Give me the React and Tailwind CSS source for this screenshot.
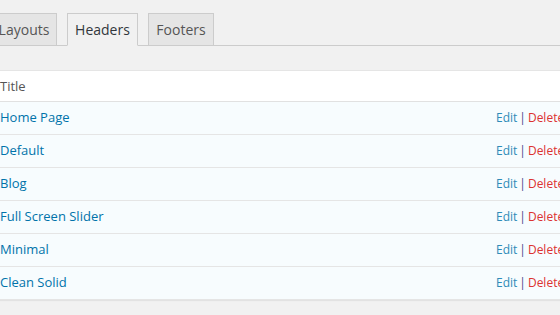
const rows = ['Home Page', 'Default', 'Blog', 'Full Screen Slider', 'Minimal', 'Clean Solid']

export default function App() {
  return (
    <div className="w-[560px] h-[315px] overflow-hidden bg-[#f1f1f1] text-[#32373c]" style={{ fontFamily: '"Open Sans", sans-serif' }}>
      {/* tabs */}
      <div className="pt-[13px] border-b border-[#ccc] h-[46px] flex items-end -ml-[9px]">
        <div className="flex gap-[10px] -mb-px">
          <a className="h-[33px] w-[66px] border border-[#ccc] bg-[#e5e5e5] text-[14px] text-[#555] flex items-center justify-center">Layouts</a>
          <a className="h-[33px] w-[71px] border border-[#ccc] border-b-[#f1f1f1] bg-[#f1f1f1] text-[14px] text-[#32373c] flex items-center justify-center">Headers</a>
          <a className="h-[33px] w-[66px] border border-[#ccc] bg-[#e5e5e5] text-[14px] text-[#555] flex items-center justify-center">Footers</a>
        </div>
      </div>

      {/* table */}
      <div className="mt-[24px] border-t border-[#e5e5e5] shadow-[0_1px_1px_rgba(0,0,0,0.06)]">
        <div className="h-[31px] bg-white border-b border-[#e1e1e1] flex items-center pt-px text-[13px] text-[#555]">Title</div>
        {rows.map((r) => (
          <div key={r} className="h-[33px] bg-[#f7fcfe] border-b border-[#e5e5e5] flex items-center text-[13px]">
            <span className="flex-1 text-[#0073aa]">{r}</span>
            <span className="whitespace-nowrap w-[64px] text-[12px]">
              <span className="text-[#2e8bb8]">Edit</span>
              <span className="text-[#4b3f8a] mx-[2px]">|</span>
              <span className="text-[#dc3232]">Delete</span>
            </span>
          </div>
        ))}
      </div>
    </div>
  )
}
